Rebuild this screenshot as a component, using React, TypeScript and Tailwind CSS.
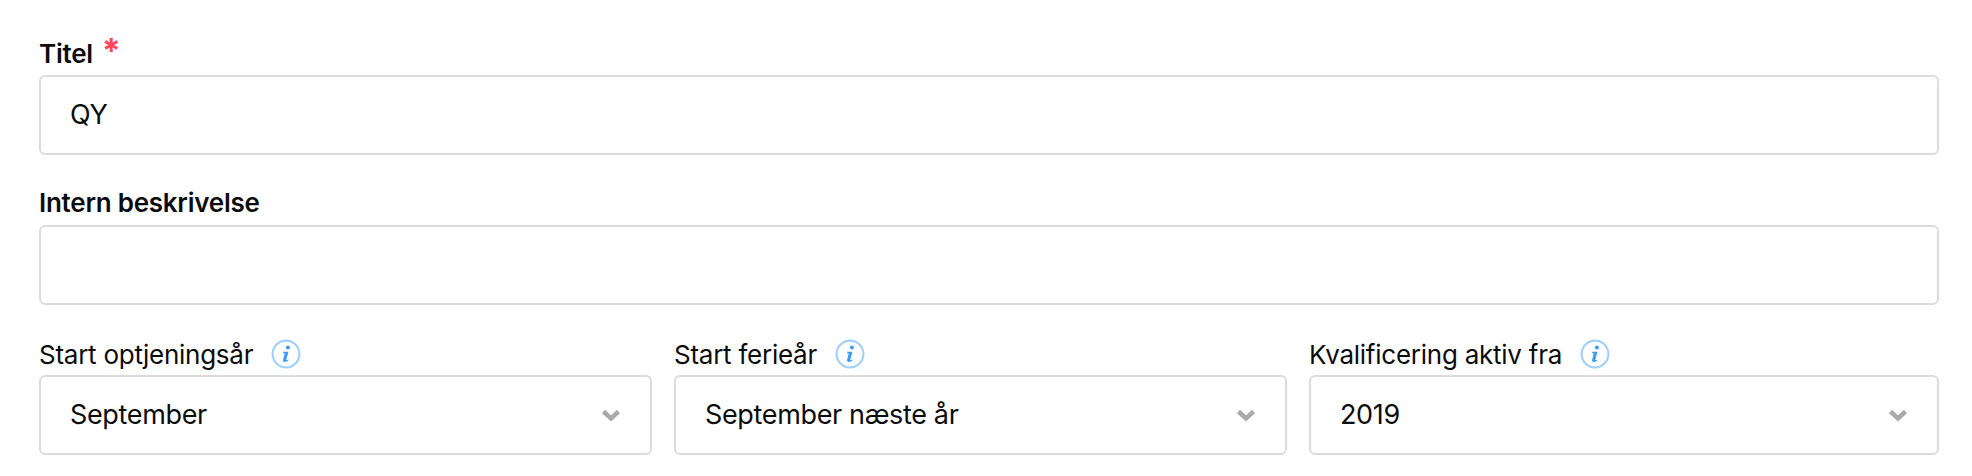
const FONT = "font-['Inter','Noto_Sans',sans-serif]";

function InfoIcon() {
  return (
    <svg width="30" height="30" viewBox="0 0 28 28" className="shrink-0">
      <circle cx="14" cy="14" r="12.5" fill="none" stroke="#a3d0fb" strokeWidth="2" />
      <circle cx="15.8" cy="8" r="1.9" fill="#3f9cf3" />
      <path d="M11.3 12h5l-2 7.4c-.1.4.3.6.6.4l1.2-.7.3.7c-1 .9-2.3 1.6-3.5 1.6-1.3 0-1.9-.7-1.6-2l1.5-5.8-1.3-.3z" fill="#3f9cf3" />
    </svg>
  );
}

function Chevron() {
  return (
    <svg width="20" height="13" viewBox="0 0 20 13" className="shrink-0">
      <path d="M2.5 2.5l7.5 7 7.5-7" fill="none" stroke="#aaaaaa" strokeWidth="4.5" />
    </svg>
  );
}

function SelectField({ label, value }: { label: string; value: string }) {
  return (
    <div>
      <div className="flex h-[37px] items-center gap-[18px] pb-[5px] text-[26px] tracking-[-0.25px] text-[#0c0c0c]">
        <span>{label}</span>
        <InfoIcon />
      </div>
      <div className="flex h-[80px] items-center justify-between rounded-[6px] border-2 border-[#dcdcdc] pl-[29px] pr-[29px] text-[27px] tracking-[-0.35px] text-[#0c0c0c]">
        <span>{value}</span>
        <Chevron />
      </div>
    </div>
  );
}

export default function App() {
  return (
    <div className={`h-[476px] w-[1972px] bg-white pl-[39px] pr-[33px] pt-[31px] ${FONT}`}>
      <div className="flex h-[44px] items-start text-[26px] font-semibold leading-[46px] tracking-[-0.25px] text-[#0c0c0c]">
        <span>Titel</span>
        <span className="ml-[9px] text-[34px] font-bold leading-[40px] text-[#ff4757]">*</span>
      </div>
      <div className="flex h-[80px] items-center rounded-[6px] border-2 border-[#dcdcdc] pl-[29px] pt-px text-[27px] tracking-[-0.35px] text-[#0c0c0c]">QY</div>
      <div className="mt-[25px] h-[45px] text-[26px] font-semibold leading-[46px] tracking-[-0.25px] text-[#0c0c0c]">Intern beskrivelse</div>
      <div className="h-[80px] rounded-[6px] border-2 border-[#dcdcdc]" />
      <div className="mt-[33px] grid grid-cols-[613px_613px_1fr] gap-x-[22px]">
        <SelectField label="Start optjeningsår" value="September" />
        <SelectField label="Start ferieår" value="September næste år" />
        <SelectField label="Kvalificering aktiv fra" value="2019" />
      </div>
    </div>
  );
}
